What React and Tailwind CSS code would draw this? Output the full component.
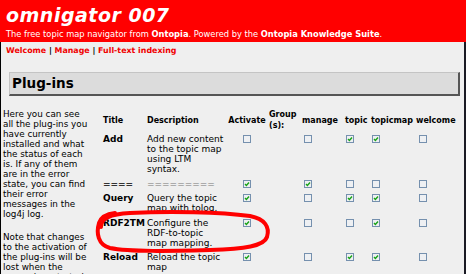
import React from 'react';

const rows = [
    { title: 'Add', desc: ['Add new content', 'to the topic map', 'using LTM', 'syntax.'], checks: [false, false, true, true, false] },
    { title: '====', desc: ['========='], checks: [true, true, false, false, false], sep: true },
    { title: 'Query', desc: ['Query the topic', 'map with tolog.'], checks: [true, false, true, true, false] },
    { title: 'RDF2TM', desc: ['Configure the', 'RDF-to-topic', 'map mapping.'], checks: [true, false, false, true, false] },
    { title: 'Reload', desc: ['Reload the topic', 'map'], checks: [true, false, true, true, false] },
];

const introLines = [
    'Here you can see',
    'all the plug-ins you',
    'have currently',
    'installed and what',
    'the status of each',
    'is. If any of them',
    'are in the error',
    'state, you can find',
    'their error',
    'messages in the',
    'log4j log.',
];

const noteLines = ['Note that changes', 'to the activation of', 'the plug-ins will be', 'lost when the', 'server is restarted.'];

const headers = ['manage', 'topic', 'topicmap', 'welcome'];

const Checkbox = ({ checked }) => (
    <span className="flex items-center justify-center w-[8px] h-[8px] border border-[#7590ae] bg-[#eef0f3]">
        {checked && (
            <svg width="6" height="6" viewBox="0 0 6 6">
                <polyline points="1,3 2.4,4.5 5,1.5" fill="none" stroke="#17a317" strokeWidth="1.4" />
            </svg>
        )}
    </span>
);

const App = () => {
    return (
        <div className="relative w-[469px] h-[274px] overflow-hidden bg-white font-['DejaVu_Sans',Verdana,sans-serif] text-black">
            <div className="w-[466px] h-full flex flex-col">
                {/* Header */}
                <div className="h-[42px] shrink-0 bg-[#ff0000] text-white pl-[6px]">
                    <div className="pt-[4px] text-[19px] leading-[22px] font-bold italic tracking-[0.5px]">omnigator 007</div>
                    <div className="mt-[3px] text-[8.3px] leading-[10px] whitespace-nowrap">
                        The free topic map navigator from <b>Ontopia</b>. Powered by the <b>Ontopia Knowledge Suite</b>.
                    </div>
                </div>

                <div className="flex-1 border-l border-r-2 border-l-black border-r-[#1a1a24] bg-[#efefef]">
                    {/* Nav */}
                    <div className="pt-[4px] pl-[5px] text-[7.9px] leading-[10px] font-bold whitespace-nowrap">
                        <span className="text-[#f00000]">Welcome</span> | <span className="text-[#f00000]">Manage</span> | <span className="text-[#f00000]">Full-text indexing</span>
                    </div>

                    {/* Heading */}
                    <div className="mt-[16px] ml-[8px] mr-[4px] h-[24px] bg-[#dcdcdc] border-t border-l border-[#c4c4c4] border-r-2 border-b-2 border-r-[#555] border-b-[#555] pl-[2px] text-[13.5px] leading-[21px] font-bold">
                        Plug-ins
                    </div>

                    <div className="flex items-start">
                        {/* Intro text */}
                        <div className="w-[102px] shrink-0 pl-[2px] mt-[13px] text-[8.8px] leading-[10px] whitespace-nowrap">
                            {introLines.map(l => <div key={l}>{l}</div>)}
                            <div className="h-[13px]"></div>
                            {noteLines.map(l => <div key={l}>{l}</div>)}
                        </div>

                        {/* Plug-in table */}
                        <div className="mt-[13px] grid grid-cols-[44px_80px_40px_35px_43px_26px_45px_47px] text-[9px] leading-[10px]">
                            <div className="h-[23px] flex items-center font-bold text-[8px]">Title</div>
                            <div className="h-[23px] flex items-center font-bold text-[8px]">Description</div>
                            <div className="h-[23px] flex items-center justify-center font-bold text-[8px]">Activate</div>
                            <div className="h-[23px] flex flex-col justify-center pl-[2px] font-bold text-[8px] leading-[11px] pb-[2px]">
                                <span>Group</span>
                                <span>(s):</span>
                            </div>
                            {headers.map(h => (
                                <div key={h} className="h-[23px] flex items-center font-bold text-[8px]">{h}</div>
                            ))}

                            {rows.map(row => (
                                <React.Fragment key={row.title}>
                                    <div className={`pt-[2px] pb-[2.5px] font-bold ${row.sep ? 'text-[#333]' : ''}`}>{row.title}</div>
                                    <div className={`pt-[2px] pb-[2.5px] whitespace-nowrap ${row.sep ? 'text-[#777]' : ''}`}>
                                        {row.desc.map(d => <div key={d}>{d}</div>)}
                                    </div>
                                    <div className="pt-[3px] flex justify-center"><Checkbox checked={row.checks[0]} /></div>
                                    <div></div>
                                    <div className="pt-[3px] pl-[2px]"><Checkbox checked={row.checks[1]} /></div>
                                    <div className="pt-[3px] pl-[1px]"><Checkbox checked={row.checks[2]} /></div>
                                    <div className="pt-[3px] pl-[1px]"><Checkbox checked={row.checks[3]} /></div>
                                    <div className="pt-[3px] pl-[3px]"><Checkbox checked={row.checks[4]} /></div>
                                </React.Fragment>
                            ))}
                        </div>
                    </div>
                </div>
            </div>

            {/* Red hand-drawn annotation */}
            <svg className="absolute left-0 top-0 pointer-events-none" width="469" height="274" viewBox="0 0 469 274">
                <path
                    d="M 101 227 C 100 219, 110 214, 130 213 C 170 211, 220 212, 250 216 C 265 219, 270 227, 267 237 C 264 246, 245 249, 210 250 C 170 251, 130 252, 110 248 C 98 245, 96 233, 99 223 C 101 217, 106 214, 115 213"
                    fill="none"
                    stroke="#ff0000"
                    strokeWidth="4"
                    strokeLinecap="round"
                />
            </svg>
        </div>
    );
};

export default App;
